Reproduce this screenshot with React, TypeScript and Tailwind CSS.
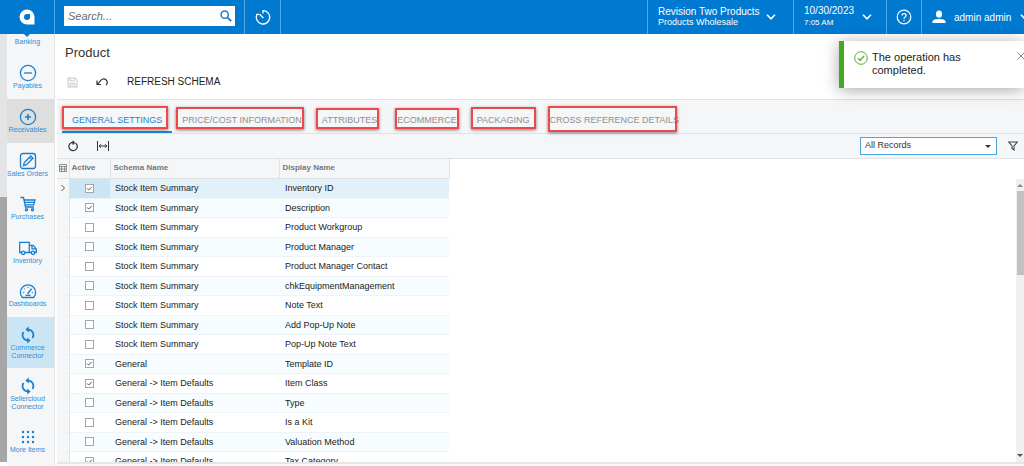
import { useState } from "react";
import type { ReactNode } from "react";
import clsx from "clsx";

interface NavItem {
  label: string;
  icon: ReactNode;
  className: string;
}

interface SchemaRow {
  active: boolean;
  schema: string;
  name: string;
}

const iconProps = {
  viewBox: "0 0 18 18",
  fill: "none",
  stroke: "currentColor",
  strokeWidth: 1.3,
  className: "h-[18px] w-[18px]",
  "aria-hidden": true,
};

const SyncIcon = () => (
  <svg {...iconProps} strokeWidth={1.7}>
    <path d="M9 3.6a5.400 5.400 0 0 1 4.500 8.400M9 14.400A5.400 5.400 0 0 1 4.500 6" />
    <path d="M9.800.6 6.400 3.600l3.400 3zM8.200 11.400l3.400 3-3.400 3z" fill="currentColor" stroke="none" />
  </svg>
);

const navItems: NavItem[] = [
  {
    label: "Payables",
    className: "h-11",
    icon: (
      <svg {...iconProps}>
        <circle cx="9" cy="9" r="7.6" />
        <path d="M5 9h8" />
      </svg>
    ),
  },
  {
    label: "Receivables",
    className: "h-11 bg-[#dedede]",
    icon: (
      <svg {...iconProps}>
        <circle cx="9" cy="9" r="7.6" />
        <path d="M6 9h6M9 6v6" strokeWidth={1.5} />
      </svg>
    ),
  },
  {
    label: "Sales Orders",
    className: "h-[43px]",
    icon: (
      <svg {...iconProps}>
        <rect x="1.5" y="1.5" width="15" height="15" rx="2.5" />
        <path d="m4.5 13.5.8-3L11.8 4l2.2 2.2-6.5 6.5zM10.4 5.4l2.2 2.2" />
      </svg>
    ),
  },
  {
    label: "Purchases",
    className: "h-11",
    icon: (
      <svg {...iconProps}>
        <path d="M1.5 2.5h3l2 9.5h8.5M5 5h11l-1.3 4.8H6M5.5 7.4h10" />
        <circle cx="7.5" cy="14.8" r="1.1" />
        <circle cx="13.5" cy="14.8" r="1.1" />
      </svg>
    ),
  },
  {
    label: "Inventory",
    className: "h-[43px]",
    icon: (
      <svg {...iconProps}>
        <path d="M2.5 13.5H.7V3.3h9.6v10.2H6M10.3 6.3h3.8l3.2 3.6v3.6h-1.5M10.3 13.5h2M13 6.5v3.4h4" />
        <circle cx="4.2" cy="13.8" r="1.7" />
        <circle cx="14" cy="13.8" r="1.7" />
      </svg>
    ),
  },
  {
    label: "Dashboards",
    className: "h-11",
    icon: (
      <svg {...iconProps}>
        <path d="M3.3 15.5a7.6 7.6 0 1 1 11.4 0z" />
        <path d="M4 10.5h1.3M5.2 6.5l.9.9M9 4.7V6M12.8 10.5H14" strokeWidth={1} />
        <path d="m8.6 11.8 4-5.2" strokeWidth={1.5} />
        <path d="M6.5 13.3h5" />
      </svg>
    ),
  },
  { label: "Commerce Connector", className: "h-[51px] bg-[#cce5f5]", icon: <SyncIcon /> },
  { label: "Sellercloud Connector", className: "h-[51px]", icon: <SyncIcon /> },
  {
    label: "More Items",
    className: "h-11",
    icon: (
      <svg {...iconProps} fill="currentColor" stroke="none">
        {[4, 9, 14].map((y) => [4, 9, 14].map((x) => <circle key={`${x}-${y}`} cx={x} cy={y} r="1.2" />))}
      </svg>
    ),
  },
];

// frame = the red outline drawn round each tab caption
const tabs = [
  { label: "GENERAL SETTINGS", frame: "left-0 right-1 top-[6px] bottom-[2px]" },
  { label: "PRICE/COST INFORMATION", frame: "left-1 right-2 top-[7px] bottom-[2px]" },
  { label: "ATTRIBUTES", frame: "left-1 right-2 top-2 bottom-[2px]" },
  { label: "ECOMMERCE", frame: "left-2 right-2 top-2 bottom-[2px]" },
  { label: "PACKAGING", frame: "left-1 right-1 top-[7px] bottom-[2px]" },
  { label: "CROSS REFERENCE DETAILS", frame: "left-2 right-3 top-[6px] -bottom-px" },
];

const initialRows: SchemaRow[] = [
  { active: true, schema: "Stock Item Summary", name: "Inventory ID" },
  { active: true, schema: "Stock Item Summary", name: "Description" },
  { active: false, schema: "Stock Item Summary", name: "Product Workgroup" },
  { active: false, schema: "Stock Item Summary", name: "Product Manager" },
  { active: false, schema: "Stock Item Summary", name: "Product Manager Contact" },
  { active: false, schema: "Stock Item Summary", name: "chkEquipmentManagement" },
  { active: false, schema: "Stock Item Summary", name: "Note Text" },
  { active: false, schema: "Stock Item Summary", name: "Add Pop-Up Note" },
  { active: false, schema: "Stock Item Summary", name: "Pop-Up Note Text" },
  { active: true, schema: "General", name: "Template ID" },
  { active: true, schema: "General -> Item Defaults", name: "Item Class" },
  { active: false, schema: "General -> Item Defaults", name: "Type" },
  { active: false, schema: "General -> Item Defaults", name: "Is a Kit" },
  { active: false, schema: "General -> Item Defaults", name: "Valuation Method" },
  { active: true, schema: "General -> Item Defaults", name: "Tax Category" },
];

const Chevron = () => (
  <svg viewBox="0 0 10 6" className="h-[6px] w-[10px] shrink-0" fill="none" stroke="currentColor" strokeWidth="1.6" aria-hidden="true">
    <path d="m1 .8 4 4 4-4" />
  </svg>
);

const TopBar = () => (
  <header className="flex h-[34px] shrink-0 bg-[#0079d0] text-white">
    <a href="#home" aria-label="Home" className="relative flex w-[54px] shrink-0 items-center justify-center">
      <svg viewBox="0 0 16 16" className="h-4 w-4" aria-hidden="true">
        <path fillRule="evenodd" fill="#fff" d="M8 .5a7.5 7.5 0 0 0 0 15h7.500V8A7.500 7.500 0 0 0 8 .5zM8 5h3v3a3 3 0 1 1-3-3z" />
      </svg>
      <span className="absolute left-6 top-full border-x-[3px] border-t-[3px] border-x-transparent border-t-[#0079d0]" />
    </a>
    <div className="flex items-center border-x border-[#55a7e0] px-[9px] pb-[2px]">
      <div className="flex h-5 w-[171px] items-center bg-white pl-1 pr-[3px]">
        <input
          aria-label="Search"
          placeholder="Search..."
          className="min-w-0 flex-1 bg-transparent text-[11px] text-[#333] outline-none placeholder:italic placeholder:text-[#6b6b6b]"
        />
        <svg viewBox="0 0 12 12" className="h-3 w-3" fill="none" stroke="#1a7dcc" strokeWidth="1.5" aria-hidden="true">
          <circle cx="4.7" cy="4.7" r="3.6" />
          <path d="m7.4 7.4 3.8 3.8" strokeWidth="1.9" />
        </svg>
      </div>
    </div>
    <button aria-label="History" className="flex w-9 items-center justify-center border-r border-[#55a7e0]">
      <svg viewBox="0 0 16 16" className="h-4 w-4" fill="none" stroke="currentColor" strokeWidth="1.3" aria-hidden="true">
        <path d="M8 4.500V1.600a6.700 6.700 0 1 1-6.200 4.200M1.200 5.300h3" />
        <path d="M4.600 5.200 8.400 9" />
      </svg>
    </button>
    <div className="ml-auto flex">
      <button className="flex w-[146px] items-center gap-[6px] border-l border-[#55a7e0] pl-[10px] text-left">
        <span className="whitespace-nowrap">
          <span className="block text-[10px] leading-[11px]">Revision Two Products</span>
          <span className="block text-[9px] leading-[11px]">Products Wholesale</span>
        </span>
        <Chevron />
      </button>
      <button className="flex w-[93px] items-center gap-2 border-l border-[#55a7e0] pl-[10px] text-left">
        <span>
          <span className="block text-[10px] leading-3">10/30/2023</span>
          <span className="block text-[8px] leading-3">7:05 AM</span>
        </span>
        <Chevron />
      </button>
      <button aria-label="Help" className="flex w-[35px] items-center justify-center border-l border-[#55a7e0]">
        <svg viewBox="0 0 16 16" className="h-4 w-4" fill="none" stroke="currentColor" strokeWidth="1.2" aria-hidden="true">
          <circle cx="8" cy="8" r="6.8" />
          <path d="M6 6.6c0-2.800 4.100-2.600 4.100-.2C10.100 8 8 7.900 8 9.700M8 10.900v1.400" />
        </svg>
      </button>
      <button className="flex w-[103px] items-center overflow-hidden border-l border-[#55a7e0] pl-[10px] text-[10px]">
        <svg viewBox="0 0 14 14" className="mr-2 h-[14px] w-[14px] shrink-0" fill="currentColor" aria-hidden="true">
          <ellipse cx="7" cy="4.200" rx="3" ry="3.600" />
          <path d="M.5 13v-1.500C.5 9.700 4 9 7 9s6.500.7 6.500 2.500V13z" />
        </svg>
        <span className="mr-[9px] whitespace-nowrap">admin admin</span>
        <Chevron />
      </button>
    </div>
  </header>
);

const Sidebar = () => (
  <div className="flex w-[57px] shrink-0">
    <div className="flex w-[7px] flex-col">
      <div className="h-[163px] bg-[#e3e4e6]" />
      <div className="mb-1 flex-1 bg-[#a6a6a6]" />
    </div>
    <nav className="w-[47px] overflow-hidden bg-[#f4f6f8] text-center text-[7px] leading-[8px] text-[#2f8ed6]">
      <a href="#banking" className="block h-[21px] pt-1 pr-[6px]">Banking</a>
      {navItems.map((item) => (
        <a
          key={item.label}
          href="#nav"
          className={clsx("flex flex-col items-center pt-[9px] pr-[6px]", item.className)}
        >
          <span className="text-[#1b7fcd]">{item.icon}</span>
          <span className="whitespace-pre-line">{item.label.replace(" Connector", "\nConnector")}</span>
        </a>
      ))}
    </nav>
    <div className="w-[3px] border-l border-[#e2e4e6] bg-white" />
  </div>
);

const CheckCell = ({ checked, label, onChange }: { checked: boolean; label: string; onChange: () => void }) => (
  <span className="relative mx-auto block h-[9px] w-[9px]">
    <input
      type="checkbox"
      aria-label={label}
      checked={checked}
      onChange={onChange}
      className="block h-[9px] w-[9px] appearance-none border border-[#a5a5a5] bg-white"
    />
    {checked && (
      <svg viewBox="0 0 9 9" className="pointer-events-none absolute inset-0" fill="none" stroke="#555" aria-hidden="true">
        <path d="m2.200 4.500 1.500 1.600 3.100-3.300" />
      </svg>
    )}
  </span>
);

const SchemaTable = () => {
  const [rows, setRows] = useState(initialRows);

  const toggle = (index: number) =>
    setRows(rows.map((row, i) => (i === index ? { ...row, active: !row.active } : row)));

  return (
    <table className="w-[392px] table-fixed border-collapse self-start text-left">
      <colgroup>
        <col className="w-3" />
        <col className="w-[41px]" />
        <col className="w-[169px]" />
        <col className="w-[170px]" />
      </colgroup>
      <thead>
        <tr className="h-[19px] bg-[#f4f6f8] text-[8px] leading-[10px] text-[#777]">
          <th className="border-r border-b border-[#dfe2e5] p-0">
            <svg viewBox="0 0 8 8" className="mx-auto h-2 w-2" fill="none" stroke="#777" strokeWidth=".8" aria-label="Columns">
              <path d="M.5.5h7v7h-7zM.5 2.500h7M.5 5h7M2.500 2.500v5M5.500 2.500v5" />
            </svg>
          </th>
          <th className="border-r border-b border-[#dfe2e5] p-0 pl-[2px]">Active</th>
          <th className="border-r border-b border-[#dfe2e5] p-0 pl-[3px]">Schema Name</th>
          <th className="border-r border-b border-[#dfe2e5] p-0 pl-[3px]">Display Name</th>
        </tr>
      </thead>
      <tbody className="text-[9px] leading-[10px] text-[#222]">
        {rows.map((row, i) => (
          <tr
            key={row.name}
            className={clsx(
              "border-b border-[#edf3f6] odd:h-5 even:h-[19px]",
              i === 0 ? "bg-[#e2f0f9]" : i % 2 === 1 ? "bg-[#f7fcfe]" : "bg-white"
            )}
          >
            <td className="border-r border-[#dfe2e5] bg-[#f4f6f8] p-0">
              {i === 0 && (
                <svg viewBox="0 0 6 8" className="mx-auto h-2 w-[6px]" fill="none" stroke="#555" aria-hidden="true">
                  <path d="m1.500 1 3 3-3 3" />
                </svg>
              )}
            </td>
            <td className={clsx("p-0", i === 0 && "bg-[#cce5f5]")}>
              <CheckCell checked={row.active} label={`${row.name} active`} onChange={() => toggle(i)} />
            </td>
            <td className="p-0 pl-[5px]">{row.schema}</td>
            <td className="p-0 pl-[6px]">{row.name}</td>
          </tr>
        ))}
      </tbody>
    </table>
  );
};

const Toast = ({ onClose }: { onClose: () => void }) => (
  <div
    role="status"
    className="absolute right-0 top-[41px] flex h-[47px] w-[185px] border-l-[5px] border-[#43a822] bg-white pl-[10px] pt-[10px] shadow-[0_2px_16px_rgba(0,0,0,0.35)]"
  >
    <svg viewBox="0 0 14 14" className="h-[14px] w-[14px] shrink-0" fill="none" stroke="#51b035" aria-hidden="true">
      <circle cx="7" cy="7" r="6.300" />
      <path d="m4 7.200 2.200 2.100 3.900-4.300" strokeWidth="1.300" />
    </svg>
    <p className="ml-1 w-28 text-[11px] leading-[13px] text-[#222]">The operation has completed.</p>
    <button aria-label="Close" onClick={onClose} className="ml-auto flex w-[7px] items-start overflow-hidden">
      <svg viewBox="0 0 8 8" className="mt-[1px] h-2 w-2 shrink-0" fill="none" stroke="#888" aria-hidden="true">
        <path d="m.5.5 7 7M7.500.5l-7 7" />
      </svg>
    </button>
  </div>
);

export default function App() {
  const [activeTab, setActiveTab] = useState("GENERAL SETTINGS");
  const [toastOpen, setToastOpen] = useState(true);

  return (
    <div className="relative flex h-screen flex-col overflow-hidden bg-white font-['Liberation_Sans',Arial,sans-serif] text-[#222]">
      <TopBar />
      <div className="flex min-h-0 flex-1">
        <Sidebar />
        <main className="flex min-w-0 flex-1 flex-col">
          <div className="flex h-[65px] shrink-0 flex-col">
            <h1 className="pl-2 pt-[10px] text-[13px] leading-[18px] text-[#333]">Product</h1>
            <div className="flex items-center pl-[10px] pt-[14px]">
              <button aria-label="Save" disabled>
                <svg viewBox="0 0 11 11" className="h-[11px] w-[11px]" fill="none" stroke="#c8c8c8" aria-hidden="true">
                  <path d="M1 1h7.500L10 2.500V10H1zM3 1v3h4.500V1M3 10V6.500h5V10M4.500 8.200h2" />
                </svg>
              </button>
              <button aria-label="Undo" className="ml-[18px]">
                <svg viewBox="0 0 12 10" className="h-[10px] w-3" fill="none" stroke="#333" strokeWidth="1.200" aria-hidden="true">
                  <path d="M1 3.500v4h4M1.300 7.300 5 3.200c3.300-3.300 8.300.5 5.200 5" />
                </svg>
              </button>
              <button className="ml-[19px] text-[10px] leading-3">REFRESH SCHEMA</button>
            </div>
          </div>

          <div role="tablist" className="flex h-[35px] shrink-0 border-y border-[#dfe2e5] bg-[#f4f6f8] pl-[5px]">
            {tabs.map((tab) => (
              <button
                key={tab.label}
                role="tab"
                aria-selected={activeTab === tab.label}
                onClick={() => setActiveTab(tab.label)}
                className={clsx(
                  "relative whitespace-nowrap border-b-2 px-[10px] pt-[10px] text-[9px]",
                  activeTab === tab.label ? "border-[#1b86d6] text-[#1b86d6]" : "border-transparent text-[#909090]"
                )}
              >
                {tab.label}
                <span className={clsx("absolute border-2 border-[#f04848] shadow-[0_1px_3px_rgba(0,0,0,0.5)]", tab.frame)} />
              </button>
            ))}
          </div>

          <div className="flex h-[25px] shrink-0 items-center border-b border-[#dfe2e5] bg-[#f4f6f8] pl-[10px] pr-[6px]">
            <button aria-label="Refresh">
              <svg viewBox="0 0 12 12" className="h-3 w-3" fill="none" stroke="#333" strokeWidth="1.200" aria-hidden="true">
                <path d="M8.500 3A4.200 4.200 0 1 1 4.200 2.700M3.900 2.700h3M5.600 .8l1.700 1.900-1.700 1.800" />
              </svg>
            </button>
            <button aria-label="Fit to screen" className="ml-[18px]">
              <svg viewBox="0 0 12 10" className="h-[10px] w-3" fill="none" stroke="#333" aria-hidden="true">
                <path d="M.5 0v10M11.500 0v10M2 5h8M4 3.200 2.200 5 4 6.800M8 3.200 9.800 5 8 6.800" />
              </svg>
            </button>
            <div className="relative ml-auto">
              <select
                aria-label="Filter"
                className="block h-[18px] w-[137px] appearance-none border border-[#4ba3e0] bg-white pl-1 text-[9px] text-[#333] outline-none"
              >
                <option>All Records</option>
              </select>
              <span className="pointer-events-none absolute right-[6px] top-2 border-x-[3px] border-t-[3px] border-x-transparent border-t-[#333]" />
            </div>
            <button aria-label="Edit filter" className="ml-[11px]">
              <svg viewBox="0 0 10 10" className="h-[10px] w-[10px]" fill="none" stroke="#444" strokeWidth="1.100" aria-hidden="true">
                <path d="M.8 1h8.400L6 5v4L4 7.500V5z" />
              </svg>
            </button>
          </div>

          <div className="flex min-h-0 flex-1 overflow-hidden">
            <SchemaTable />
            <div className="ml-auto mt-5 flex w-2 flex-col items-center bg-[#f0f0f0]">
              <span className="mt-[5px] mb-1 border-x-[3px] border-b-[3px] border-x-transparent border-b-[#888]" />
              <span className="h-[84px] w-[7px] bg-[#c1c1c1]" />
              <span className="mt-auto mb-[5px] border-x-[3px] border-t-[3px] border-x-transparent border-t-[#555]" />
            </div>
          </div>
          <div className="h-1 shrink-0 border-t-2 border-[#e4e7ea] bg-[#f7f8fa]" />
        </main>
      </div>
      {toastOpen && <Toast onClose={() => setToastOpen(false)} />}
    </div>
  );
}
